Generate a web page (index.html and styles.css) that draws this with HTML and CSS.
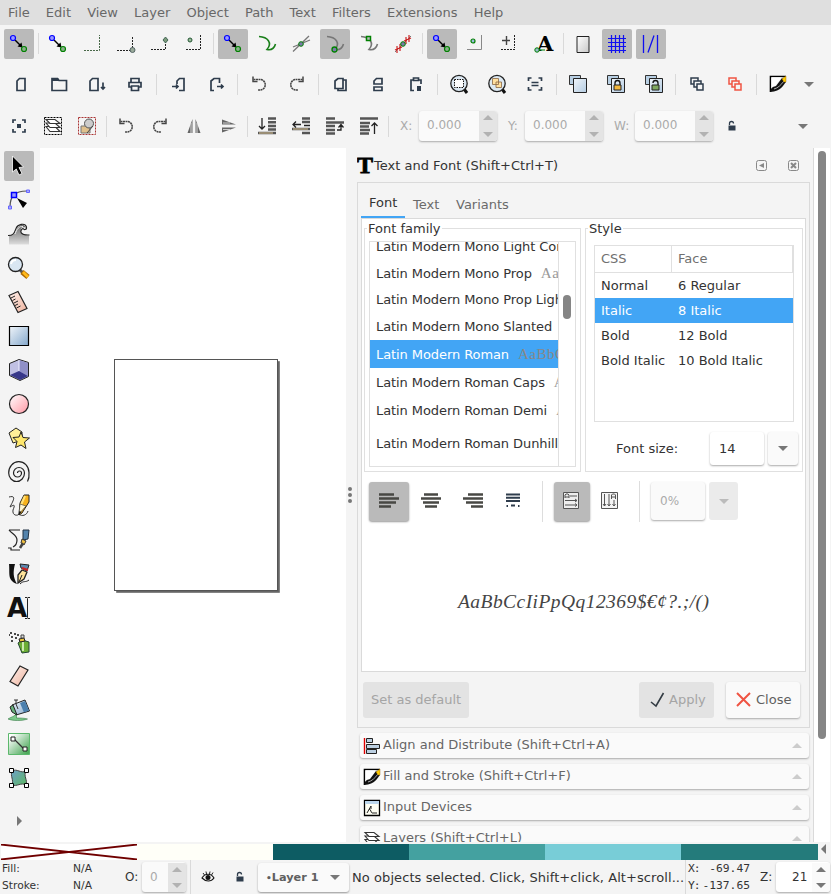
FILE: index.html
```html
<!DOCTYPE html>
<html lang="en">
<head>
<meta charset="utf-8">
<title>Inkscape</title>
<link rel="stylesheet" href="styles.css">
</head>
<body>
<svg class="defs" width="0" height="0">
  <defs>
    <linearGradient id="g-page" x1="0" y1="0" x2="1" y2="1"><stop offset="0" stop-color="#fff"/><stop offset="1" stop-color="#c8c8c8"/></linearGradient>
    <linearGradient id="g-blue" x1="0" y1="0" x2="1" y2="1"><stop offset="0" stop-color="#f0f5fa"/><stop offset="1" stop-color="#84a8cc"/></linearGradient>
    <linearGradient id="g-pale" x1="0" y1="0" x2="1" y2="1"><stop offset="0" stop-color="#f0f5fa"/><stop offset="1" stop-color="#b4cce2"/></linearGradient>
    <linearGradient id="g-pink" x1="0" y1="0" x2="1" y2="1"><stop offset="0" stop-color="#fff"/><stop offset="1" stop-color="#ff98a4"/></linearGradient>
    <linearGradient id="g-skin" x1="0" y1="0" x2="1" y2="1"><stop offset="0" stop-color="#fff1ec"/><stop offset="1" stop-color="#eeb39e"/></linearGradient>
    <linearGradient id="g-green" x1="0" y1="0" x2="1" y2="1"><stop offset=".1" stop-color="#fff"/><stop offset=".9" stop-color="#4eaa5c"/></linearGradient>
    <linearGradient id="g-mesh" x1="0" y1="0" x2="1" y2="1"><stop offset="0" stop-color="#6fa0c8"/><stop offset="1" stop-color="#5cb862"/></linearGradient>
    <linearGradient id="g-wave" x1="0" y1="0" x2="0" y2="1"><stop offset="0" stop-color="#666"/><stop offset="1" stop-color="#ddd"/></linearGradient>
  </defs>
  <symbol id="snap" viewBox="0 0 22 22"><path d="M7 7l6 6" stroke="#000" stroke-width="1.4"/><path d="M14.500 14.500l-5-1 4-4z" fill="#000"/><circle cx="5" cy="5" r="2.500" fill="#99f" stroke="#00f" stroke-width="1.200"/><circle cx="16" cy="16" r="2.500" fill="#8ab08a" stroke="#008000" stroke-width="1.200"/></symbol>
  <symbol id="undo" viewBox="0 0 22 22"><g fill="none" stroke="#444" stroke-width="1.500"><path d="M5.500 6.500H12a5 5 0 0 1 0 10.500l-2 0" stroke-dasharray="2 .5"/><path d="M5 3.500v5h4.500"/></g></symbol>
  <symbol id="redo" viewBox="0 0 22 22"><g fill="none" stroke="#444" stroke-width="1.500"><path d="M16.500 6.500H10a5 5 0 0 0 0 10.500l2 0" stroke-dasharray="2 .5"/><path d="M17 3.500v5h-4.500"/></g></symbol>
  <symbol id="lock" viewBox="0 0 22 22"><path d="M8.500 10V8.500a2 2 0 0 1 4 0" fill="none" stroke="#2e3c4c" stroke-width="1.300"/><path d="M7.500 10.500h7v5h-7z" fill="#2e3c4c"/></symbol>
  <symbol id="stroke" viewBox="0 0 22 22"><path d="M3.500 19V3.500H19" fill="none" stroke="#000" stroke-width="1.600"/><path d="M4.300 4.300H15L4.300 17z" fill="#fff"/><path d="M3 19c1-4 2-5 6-6l6-8 4 4c-3 3-4 9-16 10z" fill="#111"/><path d="M7 16c4-1 7-4 10-8" stroke="#aaa" fill="none"/><path d="M15 6l4-3v6h-2z" fill="#fc0" stroke="#850" stroke-width=".4"/></symbol>
  <symbol id="layers" viewBox="0 0 22 22"><g fill="#fff" stroke="#333" stroke-width="1.100"><path d="M4 11.500h9l5 5H8z"/><path d="M4 8h9l5 4.500H8z"/><path d="M4 4.500h9l5 4H8z"/></g></symbol>
  <symbol id="curve" viewBox="0 0 22 22"><path d="M3 3.500C12 4 16.500 10 11 16.500c5 1 7.500-2 8.500-5.500" fill="none" stroke="currentColor" stroke-width="1.600"/></symbol>
  <symbol id="stack" viewBox="0 0 22 22"><g fill="#f4f4f4" stroke="currentColor" stroke-width="1.500"><path d="M5 5h7v6H5z"/><path d="M8 8h7v6H8z"/><path d="M11 11h6v6h-6z"/></g></symbol>
  <symbol id="dup" viewBox="0 0 22 22"><path d="M2.500 2.500h11v9h-11z" fill="#b8cfe3" stroke="#333"/><path d="M6.500 5.500h13v14h-13z" fill="url(#g-pale)" stroke="#222"/></symbol>
</svg>

<nav class="menubar"><span>File</span><span>Edit</span><span>View</span><span>Layer</span><span>Object</span><span>Path</span><span>Text</span><span>Filters</span><span>Extensions</span><span>Help</span></nav>

<div class="bar snapbar">
  <b class="on"><svg><use href="#snap"/></svg></b><i></i>
  <b><svg><use href="#snap"/></svg></b>
  <b><svg><path d="M3 17.500h15.500V2" fill="none" stroke="#486848" stroke-dasharray="2 1"/></svg></b>
  <b><svg><path d="M2 17.500h15.500V3" fill="none" stroke="#222" stroke-dasharray="2 1"/><circle cx="17.500" cy="17" r="2.500" fill="#9aaa9a" stroke="#566"/></svg></b>
  <b><svg><path d="M2 16.500h14.500V8" fill="none" stroke="#222" stroke-dasharray="2 1"/><path d="M16.500 4l2.500 3-2.500 3-2.500-3z" fill="#7a9a7a" stroke="#465"/></svg></b>
  <b><svg><path d="M3 16.500h14.500V2" fill="none" stroke="#222" stroke-dasharray="2 1"/><circle cx="7" cy="7" r="2" fill="#9b9" stroke="#253"/></svg></b><i></i>
  <b class="on"><svg><use href="#snap"/></svg></b>
  <b><svg color="#1a7f1a"><use href="#curve"/></svg></b>
  <b><svg><path d="M3 18.500L19 3M3 14l17-7" stroke="#777" stroke-width="1.300"/><circle cx="11" cy="11" r="2.300" fill="#7a7aaa" stroke="#008000"/></svg></b>
  <b class="on"><svg color="#777"><use href="#curve"/><circle cx="10.500" cy="16.500" r="2.500" fill="#7a7aaa" stroke="#008000" stroke-width="1.300"/></svg></b>
  <b><svg color="#777"><use href="#curve"/><path d="M8.500 3.500h4v4h-4z" fill="#bbb" stroke="#008000" stroke-width="1.500"/></svg></b>
  <b><svg><path d="M3 19L19 3" stroke="#777"/><path d="M5 13v7M8 11v7M3 17l7-3M14 4v7M17 2v7M12 8l7-3" stroke="#c22" stroke-width="1.200"/><circle cx="11" cy="11" r="2.300" fill="#7a7aaa" stroke="#008000"/></svg></b><i></i>
  <b class="on"><svg><use href="#snap"/></svg></b>
  <b><svg><path d="M2 16.500h14.500V2" fill="none" stroke="#888"/><circle cx="8" cy="8" r="2" fill="#9bd" stroke="#008000" stroke-width="1.200"/></svg></b>
  <b><svg><path d="M3 7.500h8M7.500 3v9" stroke="#444" stroke-width="1.400"/><path d="M2 16.500h14M15.500 2v13" stroke="#222" stroke-dasharray="2 1"/></svg></b>
  <b><svg><text x="4" y="18" class="glyph-a">A</text><path d="M5 17h7" stroke="#008000"/><circle cx="4" cy="17" r="2.200" fill="#9bc" stroke="#008000"/></svg></b><i></i>
  <b><svg><path d="M5 3.500h12v16H5z" fill="url(#g-page)" stroke="#222"/></svg></b>
  <b class="on"><svg><path d="M2 5.500h18M2 9.500h18M2 13.500h18M2 17.500h18M5.500 2v18M9.500 2v18M13.500 2v18M17.500 2v18" stroke="#1010f0" stroke-width="1.200"/></svg></b>
  <b class="on"><svg><path d="M3.500 2v18M17.500 2v18M8 19.500L14 2.500" stroke="#1010f0" stroke-width="1.300"/></svg></b>
</div>

<div class="bar commands">
  <b><svg class="line"><path d="M9.500 5.500H15v12H7V8z"/></svg></b>
  <b><svg class="line"><path d="M4 17.500v-12h5.500l1.500 2h7.500v10z"/><path class="solid" d="M4 5h6l1.500 3H4z"/></svg></b>
  <b><svg class="line"><path d="M6.500 5.500H12v12H4V8zM17 9.500v6M15 14l2 2 2-2"/></svg></b>
  <b><svg class="line"><path d="M7 9V5.500h8V9M7 14H5V9.500h12V14h-2M7.500 13h7v4.500h-7z"/></svg></b><i></i>
  <b><svg class="line"><path d="M10 11V8l2.500-2.500H17v12h-5M5 13.500h6M9 11.500l2 2-2 2"/></svg></b>
  <b><svg class="line"><path d="M14.500 10V5.500H9L6 8v9.500h3M12 13.500h6M16 11.500l2 2-2 2"/></svg></b><i></i>
  <b><svg><use href="#undo"/></svg></b>
  <b><svg><use href="#redo"/></svg></b><i></i>
  <b><svg class="line"><path d="M9 5.500h5v10H6V8zM14 7h3v10.500H9V16"/></svg></b>
  <b><svg class="line"><path d="M7 11V8l2.500-2.500H15V11zM7 14h8v3.500H7z"/></svg></b>
  <b><svg class="line"><path d="M9 7H6v10.500h3M13 7h3v4M8.500 5h5v2.500h-5z"/><path class="solid" d="M12 13h4v5h-4z"/></svg></b><i></i>
  <b><svg><path d="M16 16l3 4" stroke="#111" stroke-width="3"/><circle cx="11" cy="10.500" r="8.200" fill="#dce8f2" stroke="#222" stroke-width="1.300"/><path d="M6.500 6.500h9v8h-9z" fill="#fff" stroke="#111" stroke-dasharray="1.500 1"/></svg></b>
  <b><svg><path d="M16 16l3 4" stroke="#111" stroke-width="3"/><circle cx="11" cy="10.500" r="8.200" fill="#dce8f2" stroke="#222" stroke-width="1.300"/><path d="M6.500 5.500h6v6h-6zM10 9h5.500v5.500H10z" fill="#ffe0a0" stroke="#864" stroke-width=".8"/></svg></b>
  <b><svg class="line"><path d="M4.500 8V5h3M14.500 5h3v3M17.500 14v3h-3M7.500 17h-3v-3M7.500 9.500h7M7.500 12.500h7"/></svg></b><i></i>
  <b><svg><use href="#dup"/></svg></b>
  <b><svg><use href="#dup"/><path d="M10 12v-2a2.500 2.500 0 0 1 5 0v2" fill="none" stroke="#111" stroke-width="1.300"/><path d="M9 12h7v5H9z" fill="#f3b83e" stroke="#222"/></svg></b>
  <b><svg><use href="#dup"/><path d="M10 10a2.500 2.500 0 0 1 5 0v2" fill="none" stroke="#111" stroke-width="1.300"/><path d="M9 12h7v5H9z" fill="#7fa860" stroke="#222"/></svg></b><i></i>
  <b><svg color="#2e3c4c"><use href="#stack"/></svg></b>
  <b><svg color="#ef5443"><use href="#stack"/></svg></b><i></i>
  <b><svg><use href="#stroke"/></svg></b>
  <em class="more near"></em>
</div>

<div class="bar options">
  <b><svg class="line"><path d="M5 8V5h3M14 5h3v3M17 14v3h-3M8 17H5v-3"/><path class="solid" d="M9 9h4v4H9z"/></svg></b>
  <b><svg><path d="M2.500 2.500h17v17h-17z" fill="none" stroke="#000" stroke-dasharray="2 1"/><use href="#layers"/></svg></b>
  <b><svg><path d="M2.500 2.500h17v17h-17z" fill="none" stroke="#a33" stroke-dasharray="2 1"/><path d="M5 11h9v7H5z" fill="#e0c08c" stroke="#777"/><circle cx="13" cy="8.500" r="4.500" fill="#ccc" stroke="#555"/><path d="M11 18l6-7" stroke="#444"/></svg></b><i></i>
  <b><svg><use href="#undo"/></svg></b>
  <b><svg><use href="#redo"/></svg></b>
  <b><svg><path d="M9.500 4v14H4.500zM12.500 4v14h5z" fill="#666"/><path d="M8 8v10M14 8v10" stroke="#ddd"/></svg></b>
  <b><svg><path d="M5 4.500v5h14zM5 17.500v-5h14z" fill="#666"/><path d="M6 8h7M6 14.500h7" stroke="#ccc"/></svg></b><i></i>
  <b><svg class="order"><path d="M12 3.500h8M12 7.200h8M12 11h8M12 14.500h8M2 18h18"/><path class="gold" d="M3 18h14"/><path class="thin" d="M6 3v11M3 11l3 3 3-3"/></svg></b>
  <b><svg class="order"><path d="M12 3.500h8M12 7h8M2 14h18M12 18h8"/><path class="gold" d="M3 14h15"/><path class="thin" d="M11 9.500H3M6 6.500l-3 3 3 3M14 10.500h6"/></svg></b>
  <b><svg class="order"><path d="M2 3.500h9M2 7.500h18M2 11h9M2 15h9M2 18.500h9"/><path class="thin" d="M13 15h4v-5M14.500 12.500l2.500-3 2.500 3"/></svg></b>
  <b><svg class="order"><path d="M2 3.500h18M2 8h10M2 11.500h9M2 15h10M2 18.500h9"/><path class="thin" d="M16.500 19V8M13.500 11l3-3 3 3"/></svg></b><i></i>
  <label class="lx">X:</label><span class="spin"><span>0.000</span><u></u></span>
  <label class="ly">Y:</label><span class="spin"><span>0.000</span><u></u></span>
  <label class="lw">W:</label><span class="spin"><span>0.000</span><u></u></span>
  <b class="lockslot"><svg><use href="#lock"/></svg></b>
  <em class="more"></em>
</div>

<main>
  <aside class="toolbox">
    <b class="on"><svg><path d="M4.500 1l11 11-4.500.5 3 6-3 1.500-2.700-6-3.800 3z" fill="#000" stroke="#fff" stroke-width=".8"/></svg></b>
    <b><svg><path d="M2 18C2 8 6 2 19 2" fill="none" stroke="#555" stroke-width="1.200"/><path d="M3.500 3.500h5v5h-5z" fill="#99f" stroke="#00f" stroke-width="1.500"/><path d="M18.500 1h3v2.500h-3zM.5 17h3v3h-3z" fill="#aaf" stroke="#66f"/><path d="M9 9l10 5-4 5z" fill="#000"/></svg></b>
    <b><svg><path d="M1 21.500V12.500c5 0 6-2 7.500-6S16-1 18 5c-3-2-5-1-5 2 0 4 3 5.500 8 5.500v9z" fill="url(#g-wave)"/><path d="M0 12.500c6 0 6.500-3 8-7S17-1 18.500 4c.5 3-3 3.500-3.500 1M15.500 5c-5 3-3 7.500 6 7" fill="none" stroke="#222" stroke-width="1.100"/><path d="M7 11c2-5 4-8 8-7.500" fill="none" stroke="#eee"/></svg></b>
    <b><svg><path d="M12 13l3 3" stroke="#555" stroke-width="3"/><path d="M14 15l6 5" stroke="#a60" stroke-width="5"/><path d="M15 15l5 5" stroke="#ffb91a" stroke-width="3"/><circle cx="7.500" cy="7.500" r="7" fill="#d9e6f2" stroke="#222" stroke-width="1.300"/><path d="M3 7a5 5 0 0 1 5-4" stroke="#fff" fill="none" stroke-width="2"/></svg></b>
    <b><svg><path d="M1 4.500L10 .5l9 17-9 4z" fill="url(#g-skin)" stroke="#222" stroke-width="1.200"/><path d="M3 7l4-2M4.500 9.500l3-1.500M6 12l4-2M7 14.500l3-1.500M8.500 17l4-2" stroke="#222"/></svg></b>
    <b><svg><path d="M1.500 1.500h19v19h-19z" fill="url(#g-blue)" stroke="#000" stroke-width="1.200"/></svg></b>
    <b><svg><path d="M1.500 4.500L11 .5l9.500 3v14L12 21.500l-10.500-5z" fill="#c0c0e4" stroke="#222"/><path d="M11 1l9 3v13l-9-5z" fill="#9090c8"/><path d="M2 16l9-4 9 5-8 4z" fill="#37378a"/><path d="M11 1v11" stroke="#eef"/></svg></b>
    <b><svg><circle cx="11" cy="11" r="9.500" fill="url(#g-pink)" stroke="#222" stroke-width="1.200"/></svg></b>
    <b><svg><path d="M1 6l7-5 6 4 0 8-9 3z" fill="#ffef98" stroke="#222"/><path d="M13 5l2 5.500 6.500.5-5 4 1.500 6.500-5-3.500-5.500 2.500 1.500-6-4-4 6-.5z" fill="#ffe86e" stroke="#222"/></svg></b>
    <b><svg><path d="M9.500 12A2 2 0 0 1 13.500 12A4 4 0 0 1 5.500 12A5.500 5.500 0 0 1 16.500 12A7.900 8.500 0 0 1 .7 12A10 11 0 0 1 21 11.500Q21.500 17 19.500 20.500" fill="none" stroke="#222" stroke-width="1.200"/></svg></b>
    <b><svg><path d="M1 2c8-2 4 4 1 10 5-3 5-2 3 3-1 6 5 6 6 4 3 3 8 1 9-3" fill="none" stroke="#333"/><path d="M12 8l4-8h5v7l-7 11-3 2z" fill="#f7b21c" stroke="#222"/><path d="M17 1l-4 9" stroke="#ffe27a" stroke-width="2"/><path d="M12 9l6 2-7 8z" fill="#fff6cf" stroke="#333" stroke-width=".6"/><path d="M11.500 16l2 1-3 3z" fill="#111"/></svg></b>
    <b><svg><path d="M1 1h11M1 1c3 4 8 5 8 10 0 4-2 6-4 7M0 19h3v2h9" fill="none" stroke="#222" stroke-width="1.200"/><path d="M15 1l6 0-1 9-5 1z" fill="#5484ad" stroke="#234"/><path d="M14 10l4 2-2 4-3-2z" fill="#f0c040" stroke="#333"/><path d="M12 19l3-5" stroke="#444" stroke-width="2.500"/></svg></b>
    <b><svg><path d="M1 1h6c-2 8-2 13 2 20-10-4-7-10-8-20z" fill="#111"/><path d="M12 1l9 1-2 6-6-3z" fill="#5d88ae" stroke="#222"/><path d="M14 7l5 2-3 7-6 4 0-8z" fill="#ffe39a" stroke="#222" stroke-width="1.300"/><path d="M11 19l3-7M12 21c4-4 5-1 9-4" fill="none" stroke="#222"/><path d="M14 5l6 2" stroke="#c22" stroke-width="2"/></svg></b>
    <b><svg><text x="-1" y="20" class="glyph-tool">A</text><path d="M19.500 2v18M17 .5h2l.5 1 .5-1h2M17 21.500h2l.5-1 .5 1h2" fill="none" stroke="#222"/></svg></b>
    <b><svg><path d="M10 12l4-3 7 2v10l-7 1z" fill="#6cad35" stroke="#243"/><path d="M15 11v9" stroke="#cde9ae" stroke-width="2"/><path d="M11 8l5-1 1 3-5 1z" fill="#edc33b" stroke="#222"/><path d="M13 4h3v3h-3z" fill="#ddd" stroke="#444"/><path d="M2 2h2M6 3h2M3 6h2M7 7h2M3 10h2M9 4h2M1 4h1" stroke="#111" stroke-width="1.600"/></svg></b>
    <b><svg><path d="M12 1l8 4-10 16-8-4.500z" fill="url(#g-skin)" stroke="#222" stroke-width="1.200"/></svg></b>
    <b><svg><path d="M4 6L17 1l4.500 11L8 16z" fill="url(#g-blue)" stroke="#222"/><path d="M12 4l5-2 4 9.500-5 2z" fill="#4c80ae"/><path d="M2 8l3-2 4 10-5-3z" fill="#67b07b" stroke="#222"/><path d="M8 1v4l2 5M6 1h4" fill="none" stroke="#333"/><path d="M0 20c5-3 5-2 7-4h1.500l0 3c4 0 8 0 11 1-5 2-15 2-19.500 0z" fill="#7cca8a" stroke="#263" stroke-width=".5"/></svg></b>
    <b><svg><path d="M.5.500h21v21H.5z" fill="url(#g-green)" stroke="#5cb86c"/><path d="M6 6l10 10" stroke="#333" stroke-width="1.300"/><path d="M3 4h4v4H3zM15 14h4v4h-4z" fill="#fff" stroke="#222"/></svg></b>
    <b><svg><path d="M4 4c5-3 9 3 14 0-3 5 2 9 0 14-5-3-9 2-14 0 2-5-2-9 0-14z" fill="url(#g-mesh)" stroke="#444"/><path d="M1.500 1.500h4v4h-4zM16.500 1.500h4v4h-4zM1.500 16.500h4v4h-4zM16.500 16.500h4v4h-4z" fill="#fff" stroke="#000"/></svg></b>
    <em class="expand"></em>
  </aside>
  <section class="canvas"><div class="page"></div></section>
  <div class="grip"><s></s><s></s><s></s></div>
  <section class="dock">
    <header><svg><text x="0" y="19" class="glyph-t" textLength="16" lengthAdjust="spacingAndGlyphs">T</text></svg><h1>Text and Font (Shift+Ctrl+T)</h1>
      <svg class="hbtn"><path d="M.5 2.500a2 2 0 0 1 2-2h6a2 2 0 0 1 2 2v6a2 2 0 0 1-2 2h-6a2 2 0 0 1-2-2z"/><path class="solid" d="M8 3v5L3 5.500z"/></svg>
      <svg class="hbtn"><path d="M.5 2.500a2 2 0 0 1 2-2h6a2 2 0 0 1 2 2v6a2 2 0 0 1-2 2h-6a2 2 0 0 1-2-2z"/><path d="M3 3l5 5M8 3L3 8" stroke-width="2"/></svg>
    </header>
    <div class="dialog">
      <div class="tabs"><span class="active">Font</span><span>Text</span><span>Variants</span></div>
      <div class="book">
        <div class="groups">
          <fieldset class="family"><legend>Font family</legend>
            <div class="fonts">
              <ul>
                <li>Latin Modern Mono Light Cond</li>
                <li class="r26">Latin Modern Mono Prop<q>AaBb</q></li>
                <li>Latin Modern Mono Prop Light</li>
                <li>Latin Modern Mono Slanted</li>
                <li class="r28 sel">Latin Modern Roman<q>AaBbC</q></li>
                <li class="r28">Latin Modern Roman Caps<q>Aa</q></li>
                <li class="r28">Latin Modern Roman Demi<q>Aa</q></li>
                <li class="r38">Latin Modern Roman Dunhill</li>
              </ul>
              <div class="fscroll"><s></s></div>
            </div>
          </fieldset>
          <fieldset class="style"><legend>Style</legend>
            <div class="faces">
              <div class="head"><span>CSS</span><span>Face</span></div>
              <div><span>Normal</span><span>6 Regular</span></div>
              <div class="sel"><span>Italic</span><span>8 Italic</span></div>
              <div><span>Bold</span><span>12 Bold</span></div>
              <div><span>Bold Italic</span><span>10 Bold Italic</span></div>
            </div>
            <div class="size"><label>Font size:</label><span class="entry">14</span><span class="drop"></span></div>
          </fieldset>
        </div>
        <div class="align">
          <b class="on w40"><svg class="lines"><path d="M1 4.500h15M1 8.500h20M1 12.500h17M1 16.500h12"/></svg></b>
          <b class="w40"><svg class="lines"><path d="M4 4.500h14M1 8.500h20M3 12.500h16M5 16.500h12"/></svg></b>
          <b class="w40"><svg class="lines"><path d="M6 4.500h15M1 8.500h20M4 12.500h17M9 16.500h12"/></svg></b>
          <b class="w36"><svg class="lines just"><path d="M4 4.500h14M4 7.800h14M4 11h14M9 15.500h4M4.500 16h1.500M16 16h1.500"/></svg></b>
          <i></i>
          <b class="on w36"><svg class="dir"><path d="M2.500 2.500h15v16h-15z" fill="#eee"/><path d="M4 8V5l1-1h2l1 1v3M4 7h4M9 6h7M4 10.500h12M4 15h12M14 9l2 1.500-2 1.500M14 13.500l2 1.500-2 1.500"/></svg></b>
          <b class="w36"><svg class="dir"><path d="M2.500 2.500h16v16h-16z" fill="#f4f4f4"/><path d="M12.500 9V5l1-1h2l1 1v4M12.500 7h4M5.500 4v12M10 4v12M15 10v6M4 14l1.500 2 1.500-2M8.500 14l1.500 2 1.500-2M13.500 14l1.500 2 1.500-2"/></svg></b>
          <i></i>
          <span class="entry off">0%</span><span class="drop off"></span>
        </div>
        <div class="preview"><svg><text x="1" y="28" textLength="251" lengthAdjust="spacing">AaBbCcIiPpQq12369$€¢?.;/()</text></svg></div>
      </div>
      <footer>
        <span class="btn dis">Set as default</span>
        <span class="btn dis apply"><svg><path d="M4 13l5 4L16.500 4" fill="none" stroke="#333c44" stroke-width="1.600"/></svg>Apply</span>
        <span class="btn close"><svg><path d="M3 4l13 13M16 4L3 17" stroke="#ef5443" stroke-width="2"/></svg>Close</span>
      </footer>
    </div>
    <div class="folded"><svg><path d="M3.500 3v16" stroke="#d00" stroke-width="1.400"/><path d="M5.500 3.500h6v4h-6zM5.500 9.500h13v4h-13zM5.500 14.500h10v4h-10z" fill="#bcd0e2" stroke="#222"/></svg><span>Align and Distribute (Shift+Ctrl+A)</span><em></em></div>
    <div class="folded"><svg><use href="#stroke"/></svg><span>Fill and Stroke (Shift+Ctrl+F)</span><em></em></div>
    <div class="folded"><svg><path d="M3.500 3.500h15v15h-15z" fill="#fffff4" stroke="#000" stroke-width="1.300"/><path d="M4 4h14v3H4z" fill="#bcd6ec"/><path d="M6 16l4-7M8 12c2 0 2 4 3 4h5M10 9v3" fill="none" stroke="#222"/></svg><span>Input Devices</span><em></em></div>
    <div class="folded"><svg><use href="#layers"/></svg><span>Layers (Shift+Ctrl+L)</span><em></em></div>
  </section>
  <div class="scroll"><s></s></div>
</main>

<div class="palette">
  <svg class="none" viewBox="0 0 136 16" preserveAspectRatio="none"><path d="M0 .5L136 15.500M0 15.500L136 .5" stroke="#700000" stroke-width="1.800"/></svg>
  <span class="c1"></span><span class="c2"></span><span class="c3"></span><span class="c4"></span><span class="c5"></span><em></em>
</div>

<div class="status">
  <div class="fs"><p><span>Fill:</span><span>N/A</span></p><p><span>Stroke:</span><span>N/A</span></p></div>
  <label class="lo">O:</label><span class="spin op"><span>0</span><u></u></span><i></i>
  <svg class="eye"><path d="M5 12c3-5 9-5 12 0-3 4-8 4-12 0z" fill="#f4f4f4" stroke="#111" stroke-width="1.100"/><circle cx="11" cy="11.500" r="2.500" fill="#111"/><path d="M6 7l1.500 2M9 5.500l.5 2.500M13 5.500l-.5 2.500M16 6.500L14.500 9" stroke="#222"/></svg>
  <svg class="slock"><use href="#lock"/></svg>
  <span class="layer"><span><small>•</small>Layer 1</span><em></em></span>
  <span class="msg">No objects selected. Click, Shift+click, Alt+scroll...</span><i class="full"></i>
  <div class="xy"><p><span>X:</span><span>-69.47</span></p><p><span>Y:</span><span>-137.65</span></p></div>
  <label class="lz">Z:</label><span class="spin zoom"><span>21</span><u></u></span>
</div>
</body>
</html>
```
FILE: styles.css
```css
* { box-sizing: border-box; }
body { margin: 0; width: 831px; height: 894px; overflow: hidden; display: flex; flex-direction: column; background: #f4f4f4; color: #333; font: 13px "DejaVu Sans", sans-serif; }
svg { width: 22px; height: 22px; flex: none; display: block; overflow: visible; }
.defs { width: 0; height: 0; overflow: hidden; }
p { margin: 0; }
b, i, em, s, u { font-weight: normal; font-style: normal; text-decoration: none; flex: none; display: flex; }

.menubar { height: 25px; flex: none; background: #dfdfdf; color: #686868; display: flex; align-items: center; padding-left: 8px; gap: 16.1px; white-space: nowrap; }

.bar { flex: none; display: flex; align-items: center; gap: 4px; padding-left: 4px; }
.bar b, .toolbox b { width: 30px; height: 30px; align-items: center; justify-content: center; border-radius: 2px; }
.bar .on, .toolbox .on, .align .on { background: #bababa; }
.bar i { width: 1px; height: 21px; background: #d9d9d9; }
.snapbar { height: 38px; }
.snapbar i { margin-bottom: 2px; }
.commands { height: 42px; }
.commands b { width: 34px; }
.options { height: 43px; padding-bottom: 1px; }
.line { fill: none; stroke: #2e3c4c; stroke-width: 1.7; }
.solid { fill: #2e3c4c; stroke: none; }
.order { fill: none; stroke: #555; stroke-width: 2.4; }
.order .gold { stroke: #e0c896; stroke-width: 1; }
.order .thin { stroke: #222; stroke-width: 1.3; }
.glyph-a { font: bold 21px "DejaVu Serif", serif; }
.glyph-tool { font: bold 26px "DejaVu Sans", sans-serif; fill: #111; }
.glyph-t { font: bold 23px "Liberation Serif", serif; fill: #000; stroke: #000; stroke-width: .8px; }
.more { border: 5px solid transparent; border-top-color: #777; border-bottom: 0; margin-left: auto; margin-right: 23px; }
.more.near { margin: 0 0 0 5px; }

.spin { height: 30px; display: flex; flex: none; align-items: stretch; background: #fafafa; border-radius: 3px; box-shadow: 0 1px 2px #aaa; overflow: hidden; color: #aaa; font-size: 12px; width: 78px; }
.spin > span { flex: 1; padding-left: 8px; line-height: 29px; }
.spin u { width: 18px; flex-direction: column; justify-content: space-between; align-items: center; background: #e4e4e4; padding: 4px 0; }
.spin u::before, .spin u::after { content: ""; border: 5px solid transparent; border-bottom-color: #b2b2b2; border-top: 0; }
.spin u::after { border-top: 5px solid #b2b2b2; border-bottom: 0; }
.options label { color: #aaa; font-size: 12px; flex: none; margin-right: -4px; }
.options .lx { margin-left: 7px; width: 19px; }
.options .ly { margin-left: 7px; width: 17px; }
.options .lw { margin-left: 7px; width: 21px; }

main { flex: 1; min-height: 0; display: flex; overflow: hidden; }
.toolbox { width: 40px; flex: none; padding: 3px 0 0 4px; display: flex; flex-direction: column; gap: 4px; }
.toolbox b { flex: none; }
.expand { border: 5px solid transparent; border-left-color: #777; border-right: 0; margin: 19px 0 0 13px; width: 5px; }
.canvas { width: 306px; flex: none; background: #fff; padding: 211px 0 0 74px; }
.page { width: 164px; height: 232px; border: 1px solid #555; box-shadow: 2px 2px 0 -.2px #666; }
.grip { width: 11px; flex: none; display: flex; flex-direction: column; gap: 2px; align-items: center; padding: 339px 3px 0 0; }
.grip s { width: 4px; height: 4px; border-radius: 2px; background: #777; }

.dock { width: 456px; flex: none; padding-right: 4px; overflow: hidden; display: flex; flex-direction: column; }
.dock header { height: 34px; flex: none; display: flex; align-items: center; padding-right: 10px; }
.dock header svg { width: 17px; }
.dock header h1 { font: inherit; margin: 0; flex: 1; }
.dock header .hbtn { width: 11px; height: 11px; margin: 1px 0 0 21px; fill: none; stroke: #888; }
.hbtn .solid { fill: #888; }
.dialog { width: 453px; height: 546px; flex: none; border: 1px solid #dadada; padding: 0 3px; }
.tabs { height: 36px; display: flex; color: #6a6a6a; }
.tabs span { padding: 14px 0 0 8px; margin-right: 7px; }
.tabs .active { width: 44px; height: 35px; padding: 12px 8px 0; margin: 0; border-bottom: 2px solid #42a5f5; color: #333; }
.tabs .active + span { width: 43px; margin-right: 0; }
.book { height: 454px; background: #fff; border: 1px solid #dadada; margin-top: -1px; }
.groups { display: flex; gap: 4px; padding: 1px 2px 0; height: 253px; }
fieldset { margin: 0; border: 1px solid #e0e0e0; padding: 0; min-width: 0; height: 252px; }
legend { padding: 0 1px; margin-left: 2px; height: 17px; line-height: 17px; }
.family { width: 217px; }
.style { width: 218px; }
.fonts { margin: 4px 0 0 4px; width: 207px; height: 226px; border: 1px solid #e0e0e0; display: flex; overflow: hidden; }
.fonts ul { list-style: none; margin: -9px 0 0; padding: 0; width: 188px; overflow: hidden; white-space: nowrap; }
.fonts li { height: 27px; line-height: 27px; padding-left: 6px; letter-spacing: -.08px; }
.fonts .r26 { height: 26px; line-height: 27px; }
.fonts .r28 { height: 28px; line-height: 29px; }
.fonts .r28.sel { line-height: 30px; }
.fonts .r38 { height: 38px; line-height: 39px; }
.fonts q { quotes: none; font: 15px/1 "Liberation Serif", serif; letter-spacing: .5px; color: #999; margin-left: 9px; }
.fonts .sel q { color: #888; }
.fonts .sel, .faces .sel { background: #42a5f5; color: #fff; }
.fscroll { width: 17px; border-left: 1px solid #e0e0e0; padding: 53px 0 0 4px; }
.fscroll s { width: 8px; height: 24px; border-radius: 4px; background: #858585; }
.faces { margin: 8px 0 0 8px; width: 200px; height: 177px; border: 1px solid #e0e0e0; }
.faces div { display: flex; height: 25px; line-height: 25px; }
.faces .head { height: 27px; line-height: 25px; color: #707070; border-bottom: 1px solid #e0e0e0; border-right: 1px solid #e0e0e0; }
.faces span { width: 77px; padding-left: 6px; white-space: nowrap; }
.faces span + span { width: 121px; }
.faces .head span + span { border-left: 1px solid #e0e0e0; margin-left: -1px; }
.size { display: flex; align-items: center; padding: 10px 0 0 30px; }
.size label { width: 94px; }
.entry { width: 54px; height: 33px; line-height: 33px; padding-left: 9px; border-radius: 3px; background: #fff; box-shadow: 0 1px 2px #aaa; }
.drop { width: 30px; height: 33px; margin-left: 4px; border-radius: 3px; background: #fafafa; box-shadow: 0 1px 2px #aaa; display: flex; align-items: center; justify-content: center; }
.drop::after { content: ""; border: 5px solid transparent; border-top-color: #777; border-bottom: 0; }
.align { display: flex; align-items: center; padding: 8px 0 0 7px; height: 50px; }
.align b { height: 39px; align-items: center; justify-content: center; border-radius: 3px; }
.align .on { box-shadow: 0 1px 2px #999; }
.w40 { width: 40px; margin-right: 2px; }
.w36 { width: 36px; margin-right: 2px; }
.align i { width: 1px; height: 41px; background: #ddd; margin: 0 11px 0 9px; }
.lines { fill: none; stroke: #484844; stroke-width: 2.5; }
.just { stroke: #2e3c4c; stroke-width: 2; }
.dir { fill: none; stroke: #555; }
.align .off { height: 38px; line-height: 38px; color: #aaa; font-size: 12px; background: #fafafa; }
.align .drop.off { width: 29px; background: #ebebeb; box-shadow: none; }
.align .drop.off::after { border-top-color: #bbb; }
.preview { height: 149px; display: flex; align-items: center; justify-content: center; }
.preview svg { width: 253px; height: 42px; margin-top: 8px; }
.preview text { font: italic 19.5px "Liberation Serif", serif; fill: #444; }
footer { display: flex; padding: 10px 6px 0 2px; }
.btn { height: 36px; line-height: 34px; border-radius: 3px; background: #fafafa; box-shadow: 0 1px 2px #aaa; color: #606060; display: flex; align-items: center; padding-left: 8px; }
.btn.dis { width: 106px; background: #e3e3e3; box-shadow: none; color: #a5a5a5; }
.btn.apply { width: 75px; margin-left: auto; margin-right: 12px; }
.btn.close { width: 74px; }
.folded { height: 25px; line-height: 23px; width: 449px; margin: 6px 0 0 3px; flex: none; display: flex; align-items: center; background: #fafafa; border-radius: 3px; box-shadow: 0 1px 2px #aaa; color: #666; }
.dialog + .folded { margin-top: 5px; }
.folded svg { margin-left: 1px; }
.folded span { flex: 1; height: 25px; }
.folded em { border: 5px solid transparent; border-bottom-color: #ccc; border-top: 0; margin-right: 7px; }
.scroll { width: 17px; flex: none; border-left: 1px solid #dadada; background: #fff; padding: 3px 0 0 4px; }
.scroll s { width: 8px; height: 588px; border-radius: 4px; background: #858585; }

.palette { height: 18px; flex: none; display: flex; padding: 2px 0 0 1px; }
.palette .none, .palette span { width: 136px; height: 16px; background: #fff; flex: none; }
.palette .none { overflow: hidden; }
.palette .c1 { background: #fffff8; }
.palette .c2 { background: #0d5c63; }
.palette .c3 { background: #44a1a0; }
.palette .c4 { background: #78cdd7; }
.palette .c5 { background: #247b7b; width: 137px; }
.palette em { border: 5px solid transparent; border-right-color: #777; border-left: 0; height: 10px; margin-left: 3px; }

.status { height: 34px; flex: none; display: flex; align-items: center; padding-left: 2px; white-space: nowrap; }
.fs, .xy { font-size: 10.7px; line-height: 17px; align-self: flex-start; flex: none; }
.fs p, .xy p { display: flex; justify-content: space-between; }
.fs { width: 90px; }
.lo { font-size: 12px; margin-left: 33px; width: 17px; }
.spin.op { width: 44px; }
.status .spin { padding-top: 1px; }
.status i { width: 1px; height: 34px; background: #dadada; margin: 0 0 0 4px; }
.eye { margin-left: 6px; }
.slock { margin-left: 10px; }
.layer { height: 29px; width: 91px; margin-left: 7px; background: #fafafa; border-radius: 3px; box-shadow: 0 1px 2px #999; display: flex; align-items: center; font: bold 11.3px "DejaVu Sans", sans-serif; color: #606060; padding-left: 8px; flex: none; }
.layer span { flex: 1; }
.layer small { font-size: 9px; }
.layer em { border: 5px solid transparent; border-top-color: #777; border-bottom: 0; margin-right: 9px; }
.msg { margin-left: 3px; width: 333px; flex: none; letter-spacing: .08px; }
.status .full { margin: 0 2px 0 0; }
.xy { width: 62px; font: 11.3px/17px "DejaVu Sans Mono", monospace; }
.xy span:first-child { letter-spacing: -1px; }
.lz { font-size: 12px; margin-left: 10px; width: 16px; flex: none; }
.spin.zoom { width: 54px; background: #fff; color: #333; }
.zoom > span { padding-left: 16px; }
.spin.zoom u { background: #fafafa; }
.spin.zoom u::before { border-bottom-color: #777; }
.spin.zoom u::after { border-top-color: #777; }
```
